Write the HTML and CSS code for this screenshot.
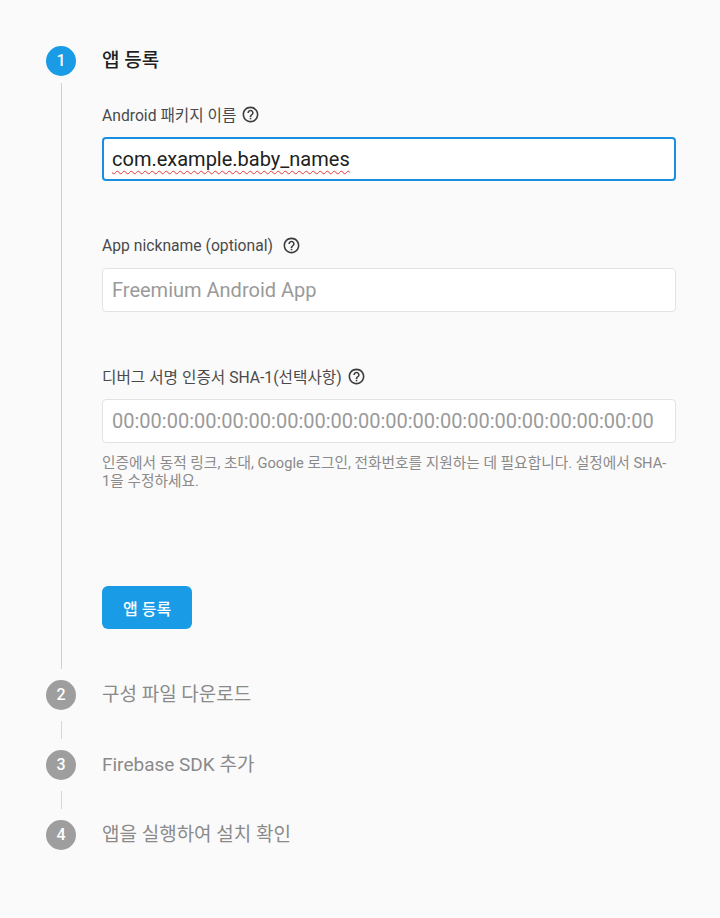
FILE: index.html
```html
<!DOCTYPE html>
<html lang="ko">
<head>
    <meta charset="UTF-8">
    <meta name="viewport" content="width=device-width, initial-scale=1.0">
    <title>Android 앱에 Firebase 추가</title>
    <link rel="stylesheet" href="styles.css">
</head>
<body>
    <div class="stepper">
        <div class="step active">
            <div class="marker">
                <span class="circle">1</span>
                <span class="rail"></span>
            </div>
            <div class="content">
                <h2 class="step-title">앱 등록</h2>

                <div class="field first">
                    <label>Android 패키지 이름
                        <svg class="help" viewBox="0 0 24 24"><path d="M11 18h2v-2h-2v2zm1-16C6.48 2 2 6.48 2 12s4.48 10 10 10 10-4.48 10-10S17.52 2 12 2zm0 18c-4.41 0-8-3.59-8-8s3.59-8 8-8 8 3.59 8 8-3.59 8-8 8zm0-14c-2.21 0-4 1.79-4 4h2c0-1.1.9-2 2-2s2 .9 2 2c0 2-3 1.75-3 5h2c0-2.25 3-2.5 3-5 0-2.21-1.79-4-4-4z"/></svg>
                    </label>
                    <div class="input focused"><span class="misspelled">com.example.baby_names</span></div>
                </div>

                <div class="field">
                    <label>App nickname (optional)&nbsp;
                        <svg class="help" viewBox="0 0 24 24"><path d="M11 18h2v-2h-2v2zm1-16C6.48 2 2 6.48 2 12s4.48 10 10 10 10-4.48 10-10S17.52 2 12 2zm0 18c-4.41 0-8-3.59-8-8s3.59-8 8-8 8 3.59 8 8-3.59 8-8 8zm0-14c-2.21 0-4 1.79-4 4h2c0-1.1.9-2 2-2s2 .9 2 2c0 2-3 1.75-3 5h2c0-2.25 3-2.5 3-5 0-2.21-1.79-4-4-4z"/></svg>
                    </label>
                    <div class="input placeholder">Freemium Android App</div>
                </div>

                <div class="field">
                    <label>디버그 서명 인증서 SHA-1(선택사항)
                        <svg class="help" viewBox="0 0 24 24"><path d="M11 18h2v-2h-2v2zm1-16C6.48 2 2 6.48 2 12s4.48 10 10 10 10-4.48 10-10S17.52 2 12 2zm0 18c-4.41 0-8-3.59-8-8s3.59-8 8-8 8 3.59 8 8-3.59 8-8 8zm0-14c-2.21 0-4 1.79-4 4h2c0-1.1.9-2 2-2s2 .9 2 2c0 2-3 1.75-3 5h2c0-2.25 3-2.5 3-5 0-2.21-1.79-4-4-4z"/></svg>
                    </label>
                    <div class="input placeholder">00:00:00:00:00:00:00:00:00:00:00:00:00:00:00:00:00:00:00:00</div>
                    <p class="hint">인증에서 동적 링크, 초대, Google 로그인, 전화번호를 지원하는 데 필요합니다. 설정에서 SHA-<wbr>1을 수정하세요.</p>
                </div>

                <button class="primary">앱 등록</button>
            </div>
        </div>

        <div class="step">
            <div class="marker"><span class="circle">2</span></div>
            <div class="content"><h2 class="step-title">구성 파일 다운로드</h2></div>
        </div>
        <div class="connector"></div>
        <div class="step">
            <div class="marker"><span class="circle">3</span></div>
            <div class="content"><h2 class="step-title">Firebase SDK 추가</h2></div>
        </div>
        <div class="connector"></div>
        <div class="step">
            <div class="marker"><span class="circle">4</span></div>
            <div class="content"><h2 class="step-title">앱을 실행하여 설치 확인</h2></div>
        </div>
    </div>
</body>
</html>
```

FILE: styles.css
```css
body {
    margin: 0;
    padding: 0;
    background-color: #fafafa;
    font-family: Roboto, "Noto Sans CJK KR", sans-serif;
    color: #212121;
}
.stepper {
    padding: 46px 44px 60px 46px;
}
.step {
    display: flex;
}
.marker {
    width: 30px;
    margin-right: 26px;
    display: flex;
    flex-direction: column;
    align-items: center;
}
.circle {
    width: 30px;
    height: 30px;
    border-radius: 50%;
    background-color: #9e9e9e;
    color: #fff;
    font-size: 16px;
    font-weight: 500;
    line-height: 30px;
    text-align: center;
    flex-shrink: 0;
}
.active .circle {
    background-color: #1a9be6;
}
.rail {
    flex: 1;
    width: 1px;
    background-color: #cfcfcf;
    margin-top: 7px;
}
.content {
    flex: 1;
}
.step-title {
    margin: 0;
    font-size: 19px;
    font-weight: 400;
    line-height: 30px;
    color: #8a8a8a;
}
.active .step-title {
    color: #1f1f1f;
    font-weight: 500;
}
.active .content {
    padding-bottom: 40px;
}
.step + .step,
.connector + .step {
    margin-top: 11px;
}
.connector {
    width: 1px;
    height: 18px;
    margin: 11px 0 0 15px;
    background-color: #d6d6d6;
}
.field {
    margin-top: 54px;
}
.field.first {
    margin-top: 28px;
}
.field label {
    display: flex;
    align-items: center;
    height: 20px;
    font-size: 15.7px;
    color: #4a4a4a;
    margin-bottom: 13px;
}
.help {
    width: 19px;
    height: 19px;
    margin-left: 5px;
    fill: #3c3c3c;
}
.input {
    box-sizing: border-box;
    height: 44px;
    padding: 0 9px;
    border: 1px solid #e3e3e3;
    border-radius: 4px;
    background-color: #fff;
    font-size: 20px;
    line-height: 42px;
    color: #212121;
    white-space: nowrap;
    overflow: hidden;
}
.input.focused {
    border: 2px solid #1a8fe0;
    line-height: 40px;
    padding: 0 8px;
}
.input.placeholder {
    color: #9a9a9a;
}
.misspelled {
    text-decoration: underline wavy #e53935;
    text-decoration-thickness: 1px;
    text-underline-offset: 4px;
}
.hint {
    margin: 11px 0 0;
    font-size: 14.7px;
    line-height: 18px;
    color: #8a8a8a;
    word-break: keep-all;
}
.primary {
    margin-top: 96px;
    height: 43px;
    padding: 0 21px;
    border: none;
    border-radius: 6px;
    background-color: #1a9be6;
    color: #fff;
    font-family: inherit;
    font-size: 16px;
    font-weight: 500;
    cursor: pointer;
}
```
